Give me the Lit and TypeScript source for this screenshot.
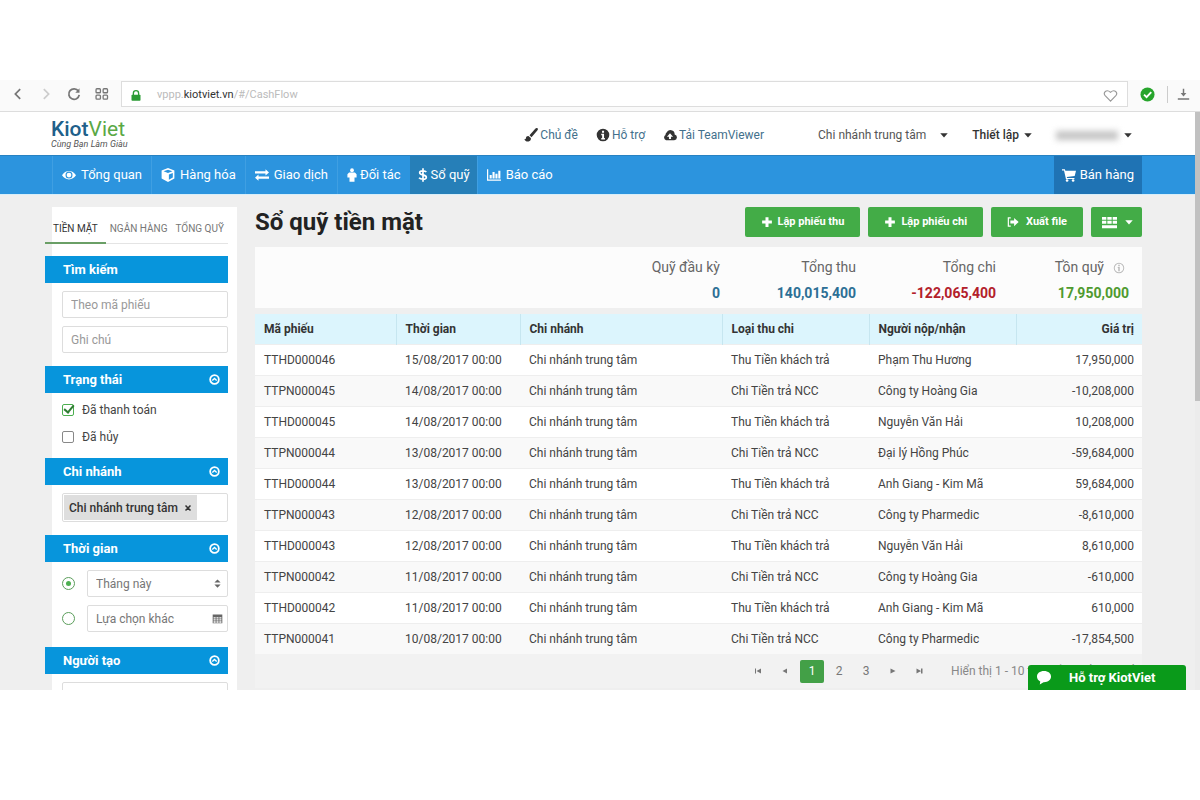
import { LitElement, html, css, svg } from "lit";
import { customElement, property } from "lit/decorators.js";
import { classMap } from "lit/directives/class-map.js";

const icons: Record<string, unknown> = {
  back: svg`<path d="M10.5 2.5 5 8l5.500 5.500" fill="none" stroke="currentColor" stroke-width="2"/>`,
  forward: svg`<path d="M5.500 2.500 11 8l-5.500 5.500" fill="none" stroke="currentColor" stroke-width="2"/>`,
  reload: svg`<path d="M13 4.600A6 6 0 1 0 14 9" fill="none" stroke="currentColor" stroke-width="2"/><path d="M14.300 1.500v5H9.500z"/>`,
  speed: svg`<g fill="none" stroke="currentColor" stroke-width="1.500"><rect x="1.200" y="2" width="5" height="4.600" rx="1"/><rect x="9.300" y="2" width="5" height="4.600" rx="1"/><rect x="1.200" y="9.200" width="5" height="4.600" rx="1"/><rect x="9.300" y="9.200" width="5" height="4.600" rx="1"/></g>`,
  lock: svg`<path d="M4.500 8V5a3.500 3.500 0 0 1 7 0v3" fill="none" stroke="currentColor" stroke-width="1.800"/><rect x="2" y="7" width="12" height="8" rx="1"/>`,
  heart: svg`<path d="M8 14 2.300 8.200C-.2 5.200 3.500.6 8 4.600c4.500-4 8.200.6 5.700 3.600z" fill="none" stroke="currentColor" stroke-width="1.200"/>`,
  safe: svg`<circle cx="8" cy="8" r="7.500"/><path d="m4.300 8.200 2.700 2.700 5-5.400" fill="none" stroke="#fff" stroke-width="2"/>`,
  download: svg`<path d="M8 1v7M1 13.500h14" fill="none" stroke="currentColor" stroke-width="1.800"/><path d="M4.500 6h7L8 10.500z"/>`,
  brush: svg`<path d="M15.600.5c-1-.9-2.200-.2-3 .7L6.300 8.300l2.300 2.200 6.600-7.700c.7-.8 1-1.700.4-2.300zM5.400 9.300C3.500 9 2.400 10 2.200 11.800c-.1.900-.8 1.200-1.900 1C1.500 15 3.400 15.800 5.300 15.300c1.900-.5 2.900-2 2.500-3.800z"/>`,
  help: svg`<path fill-rule="evenodd" d="M8 .8a7.200 7.200 0 1 0 0 14.400A7.200 7.200 0 0 0 8 .8zM6.900 3h2.300v2.300H6.900zM6 6.500h3.200v4.800h1V13H6v-1.700h1V8.200H6z"/>`,
  cloud: svg`<path fill-rule="evenodd" d="M13.300 7.300A4.800 4.800 0 0 0 4.100 5.200 3 3 0 0 0 2.900 8 3.300 3.300 0 0 0 3.500 14h9.300a3.400 3.400 0 0 0 .5-6.700zM8 6l3.500 4H9.200v2.500H6.800V10H4.500z"/>`,
  eye: svg`<path fill-rule="evenodd" d="M0 8.300C3.800 1.800 12.200 1.800 16 8.300c-3.800 6.300-12.200 6.300-16 0zm8 3.800a4 4 0 1 0 0-8 4 4 0 0 0 0 8zm0-1.300a2.700 2.700 0 1 1 0-5.400 2.700 2.700 0 0 1 0 5.400z"/>`,
  cube: svg`<path fill-rule="evenodd" d="M8 0 15.300 2.900V12L8 16 .7 12V2.900zM8 1.900 2.900 3.800 8 5.800l5.100-2zM9 7.500v5.900l4.500-2.500V5.700z"/>`,
  exchange: svg`<path d="M0 3.800h12V1.500l4 3.500-4 3.500V6.200H0zM16 9.800H4V7.500L0 11l4 3.500v-2.300h12z"/>`,
  person: svg`<circle cx="6" cy="2.300" r="2.300"/><path d="M2.500 5h7l2 2v4H9v5H3v-5H.5V7z"/>`,
  dollar: svg`<path d="M10 4.500C8.500 2.600 2 2.300 2 5.300c0 3.200 8 1.900 8 5.300 0 3.300-7 3-8.700.7M6 0v16" fill="none" stroke="currentColor" stroke-width="2"/>`,
  chart: svg`<path d="M0 1.500h1.400v11.700H16v1.500H0zM3 8h2.400v4H3zM6.300 4.500h2.400V12H6.300zM9.600 6.500H12V12H9.600zM12.900 3h2.400v9h-2.400z"/>`,
  cart: svg`<path d="M0 1.500h3.300l.5 1.700H16l-1.500 6-9 1 .3 1.200h8.400v1.300H4.500L2.300 2.800H0z"/><circle cx="5.800" cy="14.300" r="1.500"/><circle cx="12.700" cy="14.300" r="1.500"/>`,
  plus: svg`<path d="M6 1.500h4V6h4.500v4H10v4.500H6V10H1.500V6H6z"/>`,
  exportFile: svg`<path d="M5 2.500H1.800v11H5" fill="none" stroke="currentColor" stroke-width="1.600"/><path d="M4.500 6h5V2.500L15.500 8l-6 5.500V10h-5z"/>`,
  grid: svg`<path d="M0 2h4.600v3H0zm5.700 0h4.600v3H5.700zm5.700 0H16v3h-4.600zM0 6.200h4.600v3.200H0zm5.700 0h4.600v3.200H5.700zm5.700 0H16v3.200h-4.600zM0 11h16v3H0z"/>`,
  caret: svg`<path d="M2 5h12l-6 7z"/>`,
  info: svg`<path fill-rule="evenodd" d="M8 1a7 7 0 1 0 0 14A7 7 0 0 0 8 1zm0 1.300a5.700 5.700 0 1 1 0 11.400A5.700 5.700 0 0 1 8 2.300z"/><path d="M7 3.800h2v1.800H7zM6.300 6.600H9v5.600H7V8h-.7z"/>`,
  collapse: svg`<circle cx="8" cy="8" r="6.300" fill="none" stroke="currentColor" stroke-width="2.600"/><path d="m4.800 9.500 3.200-3 3.200 3" fill="none" stroke="currentColor" stroke-width="2"/>`,
  sort: svg`<path d="M3.500 6.500 8 2l4.500 4.500zM3.500 9.500h9L8 14z"/>`,
  calendar: svg`<path fill-rule="evenodd" d="M1 2h14v13H1zm1.300 4v2h3V6zm4.200 0v2h3V6zm4.200 0v2h3V6zm-8.400 3v2h3V9zm4.200 0v2h3V9zm4.200 0v2h3V9zm-8.400 3v2h3v-2zm4.200 0v2h3v-2zm4.200 0v2h3v-2z"/>`,
  close: svg`<path d="m3 3 10 10M13 3 3 13" stroke="currentColor" stroke-width="3"/>`,
  first: svg`<path d="M2 3h2v10H2zM14 3v10L5 8z"/>`,
  prev: svg`<path d="M12 3v10L3 8z"/>`,
  next: svg`<path d="M3 3v10l10-5z"/>`,
  last: svg`<path d="M1 3v10l9-5zM10 3h3v10h-3z"/>`,
  bubble: svg`<path d="M8 1C3.500 1 .5 3.500.5 7c0 2.300 1.300 4.200 3.500 5.200L3.500 15.500 7.500 13c4.700.2 8-2.500 8-6S12.500 1 8 1z"/>`,
};

const narrowIcons = ["person", "dollar"];

@customElement("kv-icon")
class KvIcon extends LitElement {
  @property() name = "";
  static styles = css`
    :host { display: inline-flex; flex: none; width: 14px; height: 14px; }
    svg { width: 100%; height: 100%; fill: currentColor; }
  `;
  render() {
    const box = narrowIcons.includes(this.name) ? "0 0 12 16" : "0 0 16 16";
    return html`<svg viewBox=${box} aria-hidden="true">${icons[this.name]}</svg>`;
  }
}

const menu = [
  ["eye", "Tổng quan"],
  ["cube", "Hàng hóa"],
  ["exchange", "Giao dịch"],
  ["person", "Đối tác"],
  ["dollar", "Sổ quỹ"],
  ["chart", "Báo cáo"],
];

const thu = "Thu Tiền khách trả";
const chi = "Chi Tiền trả NCC";
const rows = [
  ["TTHD000046", "15/08/2017 00:00", thu, "Phạm Thu Hương", "17,950,000"],
  ["TTPN000045", "14/08/2017 00:00", chi, "Công ty Hoàng Gia", "-10,208,000"],
  ["TTHD000045", "14/08/2017 00:00", thu, "Nguyễn Văn Hải", "10,208,000"],
  ["TTPN000044", "13/08/2017 00:00", chi, "Đại lý Hồng Phúc", "-59,684,000"],
  ["TTHD000044", "13/08/2017 00:00", thu, "Anh Giang - Kim Mã", "59,684,000"],
  ["TTPN000043", "12/08/2017 00:00", chi, "Công ty Pharmedic", "-8,610,000"],
  ["TTHD000043", "12/08/2017 00:00", thu, "Nguyễn Văn Hải", "8,610,000"],
  ["TTPN000042", "11/08/2017 00:00", chi, "Công ty Hoàng Gia", "-610,000"],
  ["TTHD000042", "11/08/2017 00:00", thu, "Anh Giang - Kim Mã", "610,000"],
  ["TTPN000041", "10/08/2017 00:00", chi, "Công ty Pharmedic", "-17,854,500"],
];

@customElement("kv-filters")
class KvFilters extends LitElement {
  static styles = css`
    :host { display: block; font-size: 12px; color: #444; }
    * { box-sizing: border-box; }
    button, input, select { font: inherit; color: inherit; margin: 0; }
    .panel { background: #fff; margin-left: 7px; padding-right: 9px; min-height: 100%; }
    .inner { margin-left: -7px; }
    .tabs { display: flex; height: 37px; padding-top: 8px; margin-bottom: 12px; }
    .tab { flex: 1 1 auto; border: 0; border-bottom: 1px solid #e4e4e4; background: none; padding: 0 4px; font-size: 10px; color: #777; white-space: nowrap; }
    .tab.current { border-bottom: 2px solid #6a9f66; color: #333; padding: 0 8px; }
    .head { display: flex; align-items: center; justify-content: space-between; height: 27px; margin: 0; padding: 0 8px 0 18px; background: #0795dc; color: #fff; font-size: 13px; font-weight: 700; }
    .toggle { display: flex; border: 0; background: none; padding: 0; color: #fff; }
    .toggle kv-icon { width: 11px; height: 11px; }
    .body { display: flex; flex-direction: column; gap: 8px; padding: 8px 0 13px 17px; }
    .body.checks { gap: 0; padding-top: 3px; padding-bottom: 8px; }
    .field { width: 100%; height: 27px; border: 1px solid #ddd; border-radius: 2px; background: #fff; padding: 0 8px; color: #777; outline: none; }
    .field::placeholder { color: #999; opacity: 1; }
    .check { display: flex; align-items: center; gap: 8px; height: 27px; }
    .check input { appearance: none; width: 12px; height: 12px; border: 1px solid #888; border-radius: 2px; display: grid; place-items: center; }
    .check input:checked { border-color: #4caf50; }
    .check input:checked::after { content: ""; width: 4px; height: 8px; border: solid #2f7d32; border-width: 0 2px 2px 0; rotate: 40deg; translate: 1px -2px; }
    .chips { display: flex; height: 29px; border: 1px solid #ddd; border-radius: 2px; padding: 1px; }
    .chip { display: flex; align-items: center; gap: 6px; background: #dedede; padding: 0 5px; color: #333; font-weight: 500; white-space: nowrap; }
    .chip button { display: flex; border: 0; background: none; padding: 0; }
    .chip kv-icon { width: 8px; height: 8px; }
    .choice { display: flex; align-items: center; gap: 12px; }
    .choice > input { appearance: none; flex: none; width: 13px; height: 13px; border: 1px solid #5b9e5b; border-radius: 50%; display: grid; place-items: center; }
    .choice > input:checked::after { content: ""; width: 5px; height: 5px; border-radius: 50%; background: #4caf50; }
    .combo { display: grid; flex: 1; align-items: center; }
    .combo > * { grid-area: 1 / 1; }
    .combo kv-icon { justify-self: end; width: 11px; height: 11px; margin-right: 5px; color: #666; pointer-events: none; }
    .combo select { appearance: none; }
    .body.period { padding-bottom: 15px; }
    .body.last { padding-bottom: 40px; }
  `;
  head(title: string, collapsible = true) {
    return html`<h2 class="head">
      ${title}
      ${collapsible ? html`<button class="toggle" aria-label="Thu gọn ${title}"><kv-icon name="collapse"></kv-icon></button>` : ""}
    </h2>`;
  }
  render() {
    return html`<div class="panel"><div class="inner">
      <div class="tabs">
        <button class="tab current">TIỀN MẶT</button>
        <button class="tab">NGÂN HÀNG</button>
        <button class="tab">TỔNG QUỸ</button>
      </div>
      ${this.head("Tìm kiếm", false)}
      <div class="body">
        <input class="field" aria-label="Theo mã phiếu" placeholder="Theo mã phiếu">
        <input class="field" aria-label="Ghi chú" placeholder="Ghi chú">
      </div>
      ${this.head("Trạng thái")}
      <div class="body checks">
        <label class="check"><input type="checkbox" checked>Đã thanh toán</label>
        <label class="check"><input type="checkbox">Đã hủy</label>
      </div>
      ${this.head("Chi nhánh")}
      <div class="body">
        <div class="chips"><span class="chip">Chi nhánh trung tâm<button aria-label="Xóa"><kv-icon name="close"></kv-icon></button></span></div>
      </div>
      ${this.head("Thời gian")}
      <div class="body period">
        <div class="choice">
          <input type="radio" name="period" aria-label="Tháng này" checked>
          <div class="combo"><select class="field" aria-label="Kỳ"><option>Tháng này</option></select><kv-icon name="sort"></kv-icon></div>
        </div>
        <div class="choice">
          <input type="radio" name="period" aria-label="Lựa chọn khác">
          <div class="combo"><input class="field" aria-label="Khoảng thời gian" value="Lựa chọn khác"><kv-icon name="calendar"></kv-icon></div>
        </div>
      </div>
      ${this.head("Người tạo")}
      <div class="body last"><input class="field" aria-label="Người tạo"></div>
    </div></div>`;
  }
}

@customElement("kv-cashbook")
class KvCashbook extends LitElement {
  static styles = css`
    :host { display: block; font-size: 12px; color: #444; }
    * { box-sizing: border-box; }
    button { font: inherit; color: inherit; margin: 0; }
    .top { display: flex; align-items: center; justify-content: space-between; height: 30px; }
    h1 { margin: 0; font-size: 24px; font-weight: 700; line-height: 30px; color: #222; white-space: nowrap; }
    .actions { display: flex; gap: 8px; }
    .btn { display: flex; align-items: center; justify-content: center; gap: 5px; height: 30px; padding: 0 16px; border: 0; border-radius: 2px; background: #43ac47; color: #fff; font-size: 11px; font-weight: 700; white-space: nowrap; }
    .btn.export { gap: 7px; }
    .btn.columns { gap: 7px; padding: 0 8px 0 11px; }
    .btn kv-icon { width: 12px; height: 12px; }
    .btn.columns kv-icon { width: 15px; height: 15px; }
    .btn.columns .arrow { width: 10px; height: 10px; }
    .summary { display: flex; justify-content: flex-end; margin: 10px 0 0; height: 61px; padding: 10px 13px 0 0; background: #fcfcfc; }
    .sum { width: 136px; text-align: right; }
    .sum dt { display: flex; align-items: center; justify-content: flex-end; gap: 9px; font-size: 14px; line-height: 21px; color: #666; }
    .sum dt kv-icon { width: 12px; height: 12px; color: #bbb; margin-right: 4px; }
    .sum dd { margin: 5px 0 0; font-size: 14px; line-height: 21px; font-weight: 700; color: #2c6f95; }
    .sum dd.out { color: #b3202a; }
    .sum dd.left { color: #4f9a2f; }
    .sum:nth-child(3) { width: 140px; }
    .sum:last-child { width: 133px; }
    table { width: 100%; margin-top: 6px; border-collapse: collapse; table-layout: fixed; }
    th { height: 30px; padding: 0 9px; background: #dcf5fd; text-align: left; font-weight: 700; color: #333; border-left: 1px solid #c6e6f0; }
    th:first-child { border-left: 0; }
    td { height: 31px; padding: 0 9px; border-top: 1px solid #eee; background: #fff; white-space: nowrap; }
    tr:nth-child(even) td { background: #f9f9f9; }
    th:last-child, td:last-child { text-align: right; padding-right: 8px; }
    .c1 { width: 141px; } .c2 { width: 124px; } .c4, .c5 { width: 147px; } .c6 { width: 126px; }
    .pager { display: flex; align-items: center; gap: 3px; height: 34px; padding-right: 2px; justify-content: flex-end; color: #777; background: #f2f2f2; }
    .pager button { display: flex; align-items: center; justify-content: center; width: 24px; height: 23px; border: 0; border-radius: 2px; padding: 0; background: none; }
    .pager button.on { background: #43a047; color: #fff; }
    .pager kv-icon { width: 8px; height: 8px; }
    .count { margin-left: 16px; white-space: nowrap; color: #888; }
  `;
  render() {
    return html`
      <div class="top">
        <h1>Sổ quỹ tiền mặt</h1>
        <div class="actions">
          <button class="btn"><kv-icon name="plus"></kv-icon>Lập phiếu thu</button>
          <button class="btn"><kv-icon name="plus"></kv-icon>Lập phiếu chi</button>
          <button class="btn export"><kv-icon name="exportFile"></kv-icon>Xuất file</button>
          <button class="btn columns" aria-label="Cột hiển thị"><kv-icon name="grid"></kv-icon><kv-icon class="arrow" name="caret"></kv-icon></button>
        </div>
      </div>
      <dl class="summary">
        <div class="sum"><dt>Quỹ đầu kỳ</dt><dd>0</dd></div>
        <div class="sum"><dt>Tổng thu</dt><dd>140,015,400</dd></div>
        <div class="sum"><dt>Tổng chi</dt><dd class="out">-122,065,400</dd></div>
        <div class="sum"><dt>Tồn quỹ <kv-icon name="info"></kv-icon></dt><dd class="left">17,950,000</dd></div>
      </dl>
      <table>
        <colgroup><col class="c1"><col class="c2"><col><col class="c4"><col class="c5"><col class="c6"></colgroup>
        <thead><tr><th>Mã phiếu</th><th>Thời gian</th><th>Chi nhánh</th><th>Loại thu chi</th><th>Người nộp/nhận</th><th>Giá trị</th></tr></thead>
        <tbody>
          ${rows.map(([code, time, kind, person, value]) => html`<tr>
            <td>${code}</td><td>${time}</td><td>Chi nhánh trung tâm</td><td>${kind}</td><td>${person}</td><td>${value}</td>
          </tr>`)}
        </tbody>
      </table>
      <div class="pager">
        <button aria-label="Trang đầu"><kv-icon name="first"></kv-icon></button>
        <button aria-label="Trang trước"><kv-icon name="prev"></kv-icon></button>
        <button class="on">1</button><button>2</button><button>3</button>
        <button aria-label="Trang sau"><kv-icon name="next"></kv-icon></button>
        <button aria-label="Trang cuối"><kv-icon name="last"></kv-icon></button>
        <span class="count">Hiển thị 1 - 10 trên tổng số 24 phiếu</span>
      </div>`;
  }
}

@customElement("app-root")
class AppRoot extends LitElement {
  static styles = css`
    :host { display: block; box-sizing: border-box; height: 100vh; padding: 80px 0 110px; background: #fff; font: 12px/16px Roboto, "Liberation Sans", sans-serif; color: #444; }
    * { box-sizing: border-box; }
    button, input { font: inherit; color: inherit; margin: 0; }
    button { border: 0; background: none; padding: 0; }
    a { color: inherit; text-decoration: none; white-space: nowrap; }
    .window { position: relative; display: flex; flex-direction: column; height: 100%; overflow: hidden; }
    .toolbar { display: flex; align-items: center; flex: none; height: 32px; padding: 0 10px 3px 11px; background: #fafafa; border-bottom: 1px solid #ddd; color: #777; }
    .nav-btns { display: flex; gap: 13px; margin-right: 11px; }
    .nav-btns button { display: flex; width: 15px; height: 15px; }
    .nav-btns button:nth-child(2) { color: #ccc; }
    .address { display: flex; flex: 1; align-items: center; height: 26px; padding: 2px 9px 0 8px; border: 1px solid #ddd; background: #fff; font-size: 11px; color: #bbb; }
    .address b { font-weight: 400; color: #333; }
    .lock { color: #2b9b34; width: 12px; height: 13px; margin-right: 15px; }
    .url { flex: 1; }
    .heart { color: #999; width: 15px; height: 15px; }
    .safe { color: #27a52c; width: 15px; height: 15px; margin: 0 12px; }
    .dl { border-left: 1px solid #ccc; display: flex; padding: 1px 0 1px 9px; }
    .dl kv-icon { width: 13px; height: 15px; }
    .view { display: flex; flex: 1; min-height: 0; }
    .page { display: flex; flex-direction: column; flex: 1; min-width: 0; overflow: hidden; background: #efefef; }
    .scroll { flex: none; width: 5px; background: #ececec; }
    .thumb { height: 50%; background: #c1c1c1; }
    .brandbar { display: flex; align-items: center; flex: none; height: 43px; padding: 0 62px 0 51px; background: #fff; }
    .brand { flex: 1; display: flex; flex-direction: column; }
    .name { font-size: 21px; line-height: 20px; font-weight: 500; color: #20608a; }
    .name span { color: #5aa845; font-weight: 400; }
    .slogan { font-size: 9px; line-height: 10px; font-style: italic; color: #555; }
    .links, .account { padding-top: 3px; }
    .links { display: flex; align-items: center; gap: 18px; margin-right: 54px; color: #42708c; }
    .links a { display: flex; align-items: center; gap: 2px; }
    .links kv-icon { color: #333; width: 14px; height: 14px; }
    .account { display: flex; align-items: center; gap: 23px; }
    .account button { display: flex; align-items: center; gap: 4px; color: #555; white-space: nowrap; }
    .account kv-icon { width: 10px; height: 10px; color: #333; }
    .account .branch { gap: 13px; }
    .account .setup { font-weight: 500; color: #333; }
    .account .user { gap: 5px; }
    .hidden-name { width: 62px; height: 9px; background: #c4c4c4; filter: blur(3px); }
    .menu { display: flex; flex: none; height: 39px; padding: 0 53px 0 52px; background: #2c94de; border-top: 1px solid #2782c2; color: #fff; font-size: 13px; }
    .menu a { display: flex; align-items: center; gap: 5px; padding: 0 9px; border-left: 1px solid #3f9fe2; }
    .menu a.current { background: #267fb8; border-color: #267fb8; padding: 0 7px; }
    .menu a.narrow { gap: 3px; }
    .menu a.narrow kv-icon { width: 10px; }
    .menu .sell { margin-left: auto; gap: 4px; background: #1f73b4; border: 0; padding: 0 8px; }
    .content { display: flex; gap: 18px; flex: 1; min-height: 0; padding: 12px 53px 0 45px; border-top: 1px solid #d8eef9; }
    kv-filters { flex: none; width: 192px; }
    kv-cashbook { flex: 1; min-width: 0; }
    .chat { position: absolute; right: 14px; bottom: 0; display: flex; align-items: center; gap: 17px; width: 158px; height: 25px; padding: 0 8px; border-radius: 3px 3px 0 0; background: #0a9a1a; color: #fff; font-size: 13px; font-weight: 700; white-space: nowrap; }
    .chat kv-icon { width: 16px; height: 15px; }
  `;
  render() {
    return html`<div class="window">
      <div class="toolbar">
        <div class="nav-btns">
          <button aria-label="Quay lại"><kv-icon name="back"></kv-icon></button>
          <button aria-label="Tiến"><kv-icon name="forward"></kv-icon></button>
          <button aria-label="Tải lại"><kv-icon name="reload"></kv-icon></button>
          <button aria-label="Trang nhanh"><kv-icon name="speed"></kv-icon></button>
        </div>
        <div class="address">
          <kv-icon class="lock" name="lock"></kv-icon>
          <span class="url">vppp.<b>kiotviet.vn</b>/#/CashFlow</span>
          <kv-icon class="heart" name="heart"></kv-icon>
        </div>
        <kv-icon class="safe" name="safe"></kv-icon>
        <button class="dl" aria-label="Tải xuống"><kv-icon name="download"></kv-icon></button>
      </div>
      <div class="view">
        <div class="page">
          <header class="brandbar">
            <div class="brand">
              <div class="name">Kiot<span>Viet</span></div>
              <div class="slogan">Cùng Bạn Làm Giàu</div>
            </div>
            <div class="links">
              <a href="#"><kv-icon name="brush"></kv-icon>Chủ đề</a>
              <a href="#"><kv-icon name="help"></kv-icon>Hỗ trợ</a>
              <a href="#"><kv-icon name="cloud"></kv-icon>Tải TeamViewer</a>
            </div>
            <div class="account">
              <button class="branch">Chi nhánh trung tâm<kv-icon name="caret"></kv-icon></button>
              <button class="setup">Thiết lập<kv-icon name="caret"></kv-icon></button>
              <button class="user" aria-label="Tài khoản"><span class="hidden-name"></span><kv-icon name="caret"></kv-icon></button>
            </div>
          </header>
          <nav class="menu">
            ${menu.map(([icon, label]) => html`<a href="#" class=${classMap({ current: icon === "dollar", narrow: narrowIcons.includes(icon) })}><kv-icon name=${icon}></kv-icon>${label}</a>`)}
            <a class="sell" href="#"><kv-icon name="cart"></kv-icon>Bán hàng</a>
          </nav>
          <main class="content">
            <kv-filters></kv-filters>
            <kv-cashbook></kv-cashbook>
          </main>
        </div>
        <div class="scroll"><div class="thumb"></div></div>
      </div>
      <button class="chat"><kv-icon name="bubble"></kv-icon>Hỗ trợ KiotViet</button>
    </div>`;
  }
}
